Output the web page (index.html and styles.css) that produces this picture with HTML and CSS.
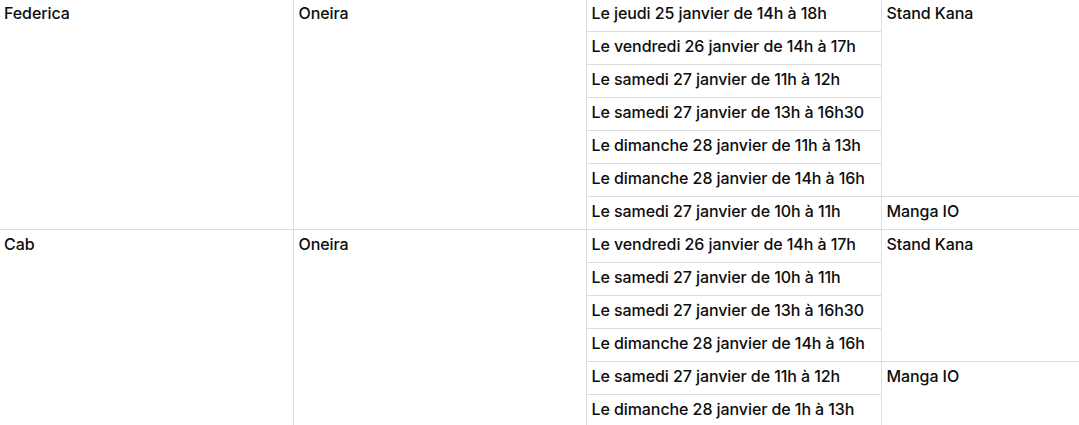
FILE: index.html
```html
<!DOCTYPE html>
<html lang="fr">
<head>
<meta charset="utf-8">
<title>Dédicaces</title>
<link rel="stylesheet" href="styles.css">
</head>
<body>
<table class="schedule">
  <colgroup>
    <col class="c-author">
    <col class="c-publisher">
    <col class="c-date">
    <col class="c-place">
  </colgroup>
  <tbody>
    <tr>
      <td class="first" rowspan="7">Federica</td>
      <td rowspan="7">Oneira</td>
      <td>Le jeudi 25 janvier de 14h à 18h</td>
      <td rowspan="6">Stand Kana</td>
    </tr>
    <tr><td>Le vendredi 26 janvier de 14h à 17h</td></tr>
    <tr><td>Le samedi 27 janvier de 11h à 12h</td></tr>
    <tr><td>Le samedi 27 janvier de 13h à 16h30</td></tr>
    <tr><td>Le dimanche 28 janvier de 11h à 13h</td></tr>
    <tr><td>Le dimanche 28 janvier de 14h à 16h</td></tr>
    <tr>
      <td>Le samedi 27 janvier de 10h à 11h</td>
      <td>Manga IO</td>
    </tr>
    <tr>
      <td class="first" rowspan="6">Cab</td>
      <td rowspan="6">Oneira</td>
      <td>Le vendredi 26 janvier de 14h à 17h</td>
      <td rowspan="4">Stand Kana</td>
    </tr>
    <tr><td>Le samedi 27 janvier de 10h à 11h</td></tr>
    <tr><td>Le samedi 27 janvier de 13h à 16h30</td></tr>
    <tr><td>Le dimanche 28 janvier de 14h à 16h</td></tr>
    <tr>
      <td>Le samedi 27 janvier de 11h à 12h</td>
      <td rowspan="2">Manga IO</td>
    </tr>
    <tr><td>Le dimanche 28 janvier de 1h à 13h</td></tr>
  </tbody>
</table>
</body>
</html>
```

FILE: styles.css
```css
html, body {
  margin: 0;
  padding: 0;
  background: #ffffff;
}

.schedule {
  width: 1079px;
  margin-top: -1px;
  border-collapse: collapse;
  table-layout: fixed;
  font-family: Inter, "Noto Sans", sans-serif;
  font-size: 16px;
  font-weight: 500;
  letter-spacing: -0.08px;
  line-height: 20px;
  color: #0d0d0d;
}

.c-author { width: 293px; }
.c-publisher { width: 293px; }
.c-date { width: 295px; }
.c-place { width: 198px; }

.schedule td {
  height: 32px;
  box-sizing: border-box;
  padding: 4px 5px 8px 5px;
  vertical-align: top;
  border-left: 1px solid #dedede;
  border-bottom: 1px solid #dedede;
  white-space: nowrap;
}

.schedule td.first {
  border-left: none;
  padding-left: 4px;
}
```
